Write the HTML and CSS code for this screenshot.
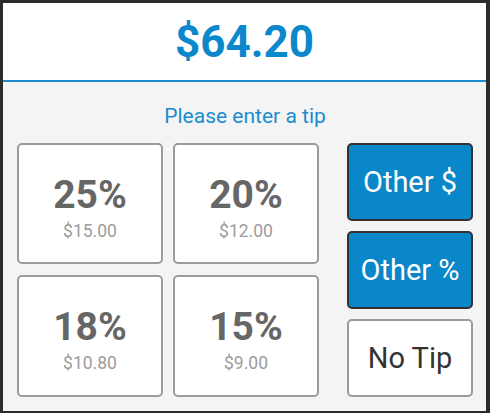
FILE: index.html
```html
<!DOCTYPE html>
<html>
<head>
<meta charset="utf-8">
<link rel="stylesheet" href="styles.css">
</head>
<body>
<div class="frame">
  <div class="panel">
    <header class="header">
      <div class="total">$64.20</div>
    </header>
    <main class="content">
      <div class="prompt">Please enter a tip</div>
      <div class="options">
        <div class="presets">
          <button class="card"><span class="pct">25%</span><span class="amt">$15.00</span></button>
          <button class="card"><span class="pct">20%</span><span class="amt">$12.00</span></button>
          <button class="card"><span class="pct">18%</span><span class="amt">$10.80</span></button>
          <button class="card"><span class="pct">15%</span><span class="amt">$9.00</span></button>
        </div>
        <div class="actions">
          <button class="action primary">Other $</button>
          <button class="action primary">Other %</button>
          <button class="action plain">No Tip</button>
        </div>
      </div>
    </main>
  </div>
</div>
</body>
</html>
```
FILE: styles.css
```css
* { box-sizing: border-box; }
html, body { margin: 0; padding: 0; }
body {
  background: #2b2b2b;
  font-family: Roboto, "Liberation Sans", sans-serif;
  width: 490px;
  height: 413px;
  overflow: hidden;
}
.frame {
  padding: 3px 4px 2px 3px;
  height: 413px;
}
.panel {
  height: 408px;
  display: flex;
  flex-direction: column;
  background: #f4f4f4;
}
.header {
  height: 79px;
  background: #fff;
  border-bottom: 2px solid #1b8dd0;
  display: flex;
  align-items: center;
  justify-content: center;
}
.total {
  font-size: 44px;
  font-weight: 700;
  color: #0a88cb;
  line-height: 1;
}
.content {
  flex: 1;
  padding: 0 13px 0 14px;
}
.prompt {
  margin-top: 22px;
  margin-bottom: 15px;
  line-height: 24px;
  font-size: 21px;
  color: #1a8ccf;
  text-align: center;
}
.options {
  display: flex;
  gap: 28px;
}
.presets {
  display: grid;
  grid-template-columns: 146px 146px;
  grid-template-rows: 121px 122px;
  column-gap: 10px;
  row-gap: 11px;
}
.card {
  font-family: inherit;
  background: #fff;
  border: 2px solid #9b9b9b;
  border-radius: 5px;
  display: flex;
  flex-direction: column;
  align-items: center;
  justify-content: center;
  padding: 8px 0 0;
  margin: 0;
}
.pct {
  font-size: 39px;
  font-weight: 700;
  color: #666;
  line-height: 40px;
}
.amt {
  font-size: 17.5px;
  color: #9c9c9c;
  line-height: 20px;
  margin-top: 6px;
}
.actions {
  display: flex;
  flex-direction: column;
  gap: 10px;
  width: 126px;
}
.action {
  font-family: inherit;
  height: 78px;
  border-radius: 5px;
  font-size: 29px;
  padding: 0;
  margin: 0;
}
.primary {
  background: #0a87c9;
  color: #fff;
  border: 2px solid #333;
}
.plain {
  background: #fff;
  color: #333;
  border: 2px solid #9b9b9b;
}
```
